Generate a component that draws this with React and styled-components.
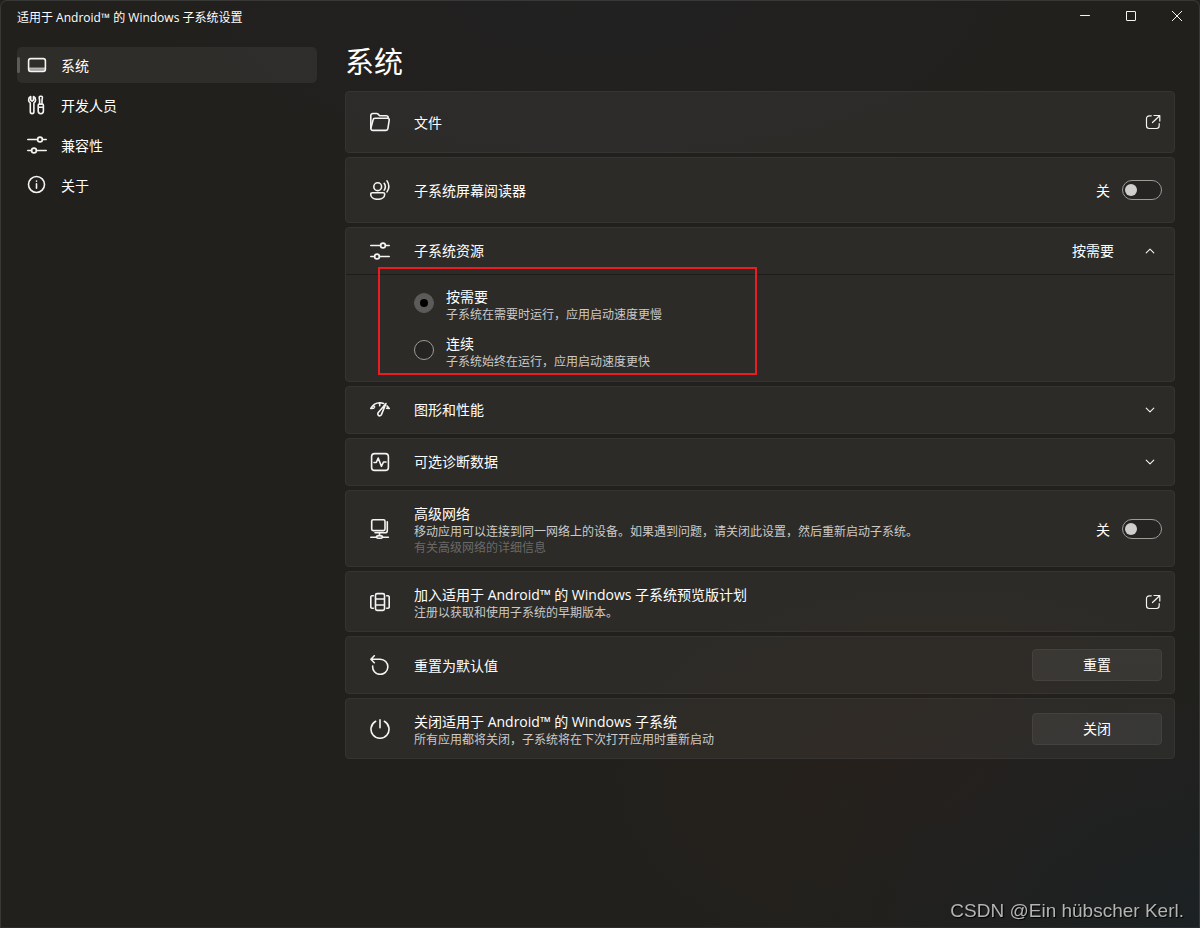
import React, { useState } from 'react';
import styled, { createGlobalStyle } from 'styled-components';

const GlobalStyle = createGlobalStyle`
  * { box-sizing: border-box; }
  body {
    margin: 0;
    background: #21201e;
    color: #fff;
    font-family: "Open Sans", "Noto Sans CJK SC", sans-serif;
    font-size: 14px;
    line-height: 20px;
  }
  button, input { font: inherit; color: inherit; }
  a { color: inherit; text-decoration: none; }
`;

const Window = styled.div`
  min-height: 100vh;
  display: flex;
  flex-direction: column;
  border: 1px solid #383836;
  border-bottom-color: #2a2a28;
  border-radius: 7px 7px 0 0;
  background:
    radial-gradient(ellipse 420px 300px at 100% 100%, #1c2123 0%, #1c212300 100%),
    radial-gradient(ellipse 400px 240px at 78% 84%, #27201c 0%, #27201c00 100%),
    radial-gradient(ellipse 500px 200px at 50% 0%, #212121 0%, #21212100 100%),
    #21201d;
`;

const TitleBar = styled.header`
  display: flex;
  justify-content: space-between;
  align-items: flex-start;
  height: 46px;
`;

const WindowTitle = styled.div`
  padding: 8px 0 0 16px;
  font-size: 12px;
  line-height: 18px;
`;

const WindowControls = styled.div`
  display: flex;
  margin-right: -1px;
`;

const ControlButton = styled.button`
  display: grid;
  place-items: center;
  width: 46px;
  height: 30px;
  padding: 0;
  border: 0;
  background: none;
`;

const Body = styled.div`
  display: flex;
  flex: 1;
  gap: 28px;
  padding: 0 24px 0 16px;
`;

const Sidebar = styled.nav`
  display: flex;
  flex-direction: column;
  gap: 4px;
  flex: 0 0 300px;
`;

const NavItem = styled.a`
  position: relative;
  display: flex;
  align-items: center;
  gap: 14px;
  height: 36px;
  padding: 0 10px;
  border-radius: 5px;
  background: ${(p) => (p.$active ? 'rgba(255, 255, 255, 0.06)' : 'none')};

  &::before {
    content: "";
    display: ${(p) => (p.$active ? 'block' : 'none')};
    position: absolute;
    left: 0;
    top: 10px;
    width: 3px;
    height: 16px;
    border-radius: 2px;
    background: #5c5b5a;
  }
`;

const Label = styled.span`
  padding-top: 2px;
`;

const Main = styled.main`
  flex: 1;
  min-width: 0;
`;

const PageTitle = styled.h1`
  margin: 0 0 14px;
  font-size: 29px;
  line-height: 30px;
  font-weight: 400;
`;

const CardList = styled.div`
  display: flex;
  flex-direction: column;
  gap: 4px;
`;

const Card = styled.section`
  position: relative;
  border: 1px solid #353432;
  border-radius: 4px;
  background: rgba(255, 255, 255, 0.05);
`;

const CardRow = styled.div`
  display: flex;
  align-items: center;
  gap: 24px;
  width: 100%;
  min-height: ${(p) => p.$height}px;
  padding: 0 12px 0 24px;
  border: 0;
  background: none;
  text-align: left;
`;

const CardText = styled.div`
  flex: 1;
  min-width: 0;
  padding-top: 2px;

  button & { padding-top: 0; }
`;

const Description = styled.div`
  font-size: 12px;
  line-height: 16px;
  color: #cbcac9;
`;

const MutedLink = styled.a`
  display: block;
  font-size: 12px;
  line-height: 16px;
  color: #6b6967;
`;

const SlotBox = styled.span`
  display: grid;
  place-items: center;
  width: ${(p) => p.$width}px;
`;

const SwitchLabel = styled.label`
  display: flex;
  align-items: center;
  gap: 12px;
`;

const Switch = styled.input`
  appearance: none;
  display: flex;
  align-items: center;
  width: 40px;
  height: 20px;
  margin: 0;
  padding: 0 2px;
  border: 1px solid #9c9b9a;
  border-radius: 10px;
  background: #252422;

  &::before {
    content: "";
    width: 12px;
    height: 12px;
    border-radius: 50%;
    background: #cfcecd;
  }
  &:checked { justify-content: flex-end; }
`;

const Options = styled.div`
  display: flex;
  flex-direction: column;
  gap: 11px;
  padding: 12px 68px 11px;
  border-top: 1px solid #1e1d1b;
`;

const Option = styled.label`
  display: flex;
  align-items: flex-start;
  gap: 12px;
`;

const Radio = styled.input`
  appearance: none;
  display: grid;
  place-items: center;
  width: 20px;
  height: 20px;
  margin: 6px 0 0;
  border: 1px solid #9c9b9a;
  border-radius: 50%;
  background: #252422;

  &:checked { border-color: #5c5b5a; background: #5c5b5a; }
  &:checked::before {
    content: "";
    width: 8px;
    height: 8px;
    border-radius: 50%;
    background: #000;
  }
`;

const Highlight = styled.div`
  position: absolute;
  left: 32px;
  top: 39px;
  width: 379px;
  height: 108px;
  border: 2px solid #ed1c24;
  pointer-events: none;
`;

const ActionButton = styled.button`
  width: 130px;
  height: 32px;
  padding: 0;
  border: 1px solid #434240;
  border-radius: 4px;
  background: rgba(255, 255, 255, 0.06);
`;

const Watermark = styled.div`
  position: fixed;
  right: 16px;
  bottom: 5px;
  font-family: "Liberation Sans", sans-serif;
  font-size: 19px;
  line-height: 24px;
  color: #b4b4b3;
  text-shadow: 1px 1px 1px #000;
`;

const Glyph = styled.svg`
  display: block;
  flex: none;
  fill: none;
  stroke: #f4f4f3;
  stroke-width: ${(p) => p.$stroke || 1.6};
  stroke-linecap: round;
  stroke-linejoin: round;
`;

const shapes = {
  system: (
    <>
      <rect x="1.6" y="3.6" width="16.8" height="12.8" rx="2.2" />
      <path d="M2 13.2h16" strokeWidth="1" />
      <path d="M2.4 14.8h15.2" strokeWidth="1.4" opacity=".6" />
    </>
  ),
  developer: (
    <>
      <path d="M3.7 1.6v3.6l1.4 1 1.4-1V1.6c1.3.6 2.1 1.8 2.1 3.3 0 1.4-.7 2.4-1.7 3v8.9a1.7 1.7 0 0 1-3.6 0V7.9c-1-.6-1.7-1.6-1.7-3 0-1.5.8-2.7 2.1-3.3Z" />
      <path d="M12.2 2.3c0-.7.5-1 1-1h1.2c.6 0 1 .3 1 1l-.4 3v3.8h-2.4V5.3ZM11.2 10.2c0-.7.4-1.1 1-1.1h3.2c.6 0 1 .4 1 1.1v5.9a2.6 2.6 0 0 1-5.2 0ZM11.3 12.2h5" />
    </>
  ),
  sliders: (
    <>
      <path d="M.8 4.5h9.8M15.4 4.5h3.8M.8 15.5h3.8M9.4 15.5h9.8" />
      <circle cx="13" cy="4.5" r="2.4" />
      <circle cx="7" cy="15.5" r="2.4" />
    </>
  ),
  info: (
    <>
      <circle cx="9.5" cy="9.5" r="8" />
      <path d="M9.5 8.8v4.5M9.5 6.1v.2" />
    </>
  ),
  folder: (
    <>
      <path d="M.8 16.2V3.5a2 2 0 0 1 2-2h3.9c.6 0 1 .2 1.4.6l1.5 1.7h6.6a2 2 0 0 1 2 2v.4" />
      <path d="M5.3 6.2h12.2c1.2 0 1.9 1 1.7 2l-1.3 8.500a2 2 0 0 1-2 1.700H2.800a2 2 0 0 1-1.900-2.300L3 8a2.200 2.200 0 0 1 2.300-1.800Z" />
    </>
  ),
  narrator: (
    <>
      <circle cx="7.7" cy="6.7" r="3.9" />
      <path d="M2.2 12.7h11a1.5 1.5 0 0 1 1.5 1.5c0 3.100-3.100 5.100-7 5.100s-7-2-7-5.100a1.500 1.500 0 0 1 1.500-1.500Z" />
      <path d="M14.2 3.3a6 6 0 0 1 0 6.8M17 .9a9.8 9.8 0 0 1 0 11" />
    </>
  ),
  gauge: (
    <>
      <path d="M.8 8.400C3 4.400 6.200 2.700 9.800 2.700c1.500 0 2.700.2 3.800.7M.8 8.400l2.900-.2M3.300 5.300l1.300 1.600M9.700 2.900v2.800M17.100 5.900l2.100 2.500-2.600-.1" />
      <path d="M16 3.500 8.300 12.600a2 2 0 0 0 .3 2.900c.9.600 2.100.4 2.700-.6Z" />
    </>
  ),
  pulse: (
    <>
      <rect x="1.6" y="1.6" width="16.8" height="16.8" rx="3" />
      <path d="M4 10.500h2.300L8.200 6l3.200 8.300 2.100-4.300H16" />
    </>
  ),
  network: (
    <>
      <rect x="1.7" y=".8" width="13.3" height="10.8" rx="1.5" />
      <path d="M17.300 2.800v8.600a2.400 2.400 0 0 1-2.400 2.400H5M9.500 14v2.200M.8 18.300h5.700M12.500 18.300h5.900" />
      <ellipse cx="9.5" cy="17.9" rx="3" ry="1.3" />
    </>
  ),
  insider: (
    <>
      <rect x="5.5" y="1.6" width="9" height="16.8" rx="1.6" />
      <path d="M5.800 7h8.400M5.800 13h8.400M3.300 3.800H2a1.200 1.200 0 0 0-1.200 1.300v9.800A1.200 1.200 0 0 0 2 16.200h1.300M16.700 3.800H18a1.200 1.200 0 0 1 1.200 1.300v9.800a1.200 1.200 0 0 1-1.200 1.300h-1.300" />
    </>
  ),
  reset: <path d="M4.300.8.900 4.200l3.400 3.500M1 4.200h9.200A7.600 7.600 0 1 1 2.700 11" />,
  power: <path d="M10 .9v7.800M5.700 2.300a9 9 0 1 0 8.600 0" />,
};

const Icon = ({ name }) => (
  <Glyph width="20" height="20" viewBox="0 0 20 20" aria-hidden="true">{shapes[name]}</Glyph>
);

const OpenIcon = () => (
  <SlotBox $width={18}>
    <Glyph $stroke={1.2} width="16" height="16" viewBox="0 0 16 16" aria-hidden="true">
      <path d="M6.300 1.800H4.200A2.700 2.700 0 0 0 1.500 4.500v7.300a2.700 2.700 0 0 0 2.700 2.700h7.300a2.700 2.700 0 0 0 2.700-2.700V9.500M9 1.500h5.800v5.600M14.600 1.700 7.500 8.500" />
    </Glyph>
  </SlotBox>
);

const Chevron = ({ up }) => (
  <SlotBox $width={24}>
    <Glyph $stroke={1.1} width="10" height="6" viewBox="0 0 10 6" aria-hidden="true">
      <path d={up ? 'M1.200 4.900 5 1.200l3.800 3.700' : 'M1.200 1.100 5 4.800l3.800-3.700'} />
    </Glyph>
  </SlotBox>
);

const Setting = ({ icon, title, desc, link, height, children, ...rest }) => (
  <CardRow $height={height} {...rest}>
    <Icon name={icon} />
    <CardText>
      <div>{title}</div>
      {desc && <Description>{desc}</Description>}
      {link && <MutedLink href="#network-info">{link}</MutedLink>}
    </CardText>
    {children}
  </CardRow>
);

const Toggle = ({ name }) => {
  const [on, setOn] = useState(false);
  return (
    <SwitchLabel>
      <Label>{on ? '开' : '关'}</Label>
      <Switch type="checkbox" role="switch" aria-label={name} checked={on} onChange={() => setOn(!on)} />
    </SwitchLabel>
  );
};

const navItems = [
  ['system', '系统'],
  ['developer', '开发人员'],
  ['sliders', '兼容性'],
  ['info', '关于'],
];

const modes = [
  ['按需要', '子系统在需要时运行，应用启动速度更慢'],
  ['连续', '子系统始终在运行，应用启动速度更快'],
];

export default function App() {
  const [mode, setMode] = useState('按需要');
  return (
    <Window>
      <GlobalStyle />
      <TitleBar>
        <WindowTitle>适用于 Android™ 的 Windows 子系统设置</WindowTitle>
        <WindowControls>
          <ControlButton aria-label="最小化">
            <Glyph $stroke={1} width="10" height="10" viewBox="0 0 10 10"><path d="M.5 4.500h9" /></Glyph>
          </ControlButton>
          <ControlButton aria-label="最大化">
            <Glyph $stroke={1} width="10" height="10" viewBox="0 0 10 10"><rect x=".5" y=".5" width="9" height="9" rx=".5" /></Glyph>
          </ControlButton>
          <ControlButton aria-label="关闭窗口">
            <Glyph $stroke={1} width="10" height="10" viewBox="0 0 10 10"><path d="m0 0 10 10M10 0 0 10" /></Glyph>
          </ControlButton>
        </WindowControls>
      </TitleBar>
      <Body>
        <Sidebar>
          {navItems.map(([icon, label], i) => (
            <NavItem key={icon} href={`#${icon}`} $active={i === 0}>
              <Icon name={icon} />
              <Label>{label}</Label>
            </NavItem>
          ))}
        </Sidebar>
        <Main>
          <PageTitle>系统</PageTitle>
          <CardList>
            <Card>
              <Setting as="a" href="#files" icon="folder" title="文件" height={60}><OpenIcon /></Setting>
            </Card>
            <Card>
              <Setting icon="narrator" title="子系统屏幕阅读器" height={64}><Toggle name="子系统屏幕阅读器" /></Setting>
            </Card>
            <Card>
              <Setting as="button" aria-expanded="true" icon="sliders" title="子系统资源" height={46}>
                <span>{mode}</span>
                <Chevron up />
              </Setting>
              <Options role="radiogroup" aria-label="子系统资源">
                {modes.map(([label, desc]) => (
                  <Option key={label}>
                    <Radio type="radio" name="mode" checked={mode === label} onChange={() => setMode(label)} />
                    <div>
                      <div>{label}</div>
                      <Description>{desc}</Description>
                    </div>
                  </Option>
                ))}
              </Options>
              <Highlight />
            </Card>
            <Card>
              <Setting as="button" aria-expanded="false" icon="gauge" title="图形和性能" height={46}><Chevron /></Setting>
            </Card>
            <Card>
              <Setting as="button" aria-expanded="false" icon="pulse" title="可选诊断数据" height={46}><Chevron /></Setting>
            </Card>
            <Card>
              <Setting
                icon="network"
                title="高级网络"
                desc="移动应用可以连接到同一网络上的设备。如果遇到问题，请关闭此设置，然后重新启动子系统。"
                link="有关高级网络的详细信息"
                height={75}
              >
                <Toggle name="高级网络" />
              </Setting>
            </Card>
            <Card>
              <Setting
                as="a"
                href="#preview"
                icon="insider"
                title="加入适用于 Android™ 的 Windows 子系统预览版计划"
                desc="注册以获取和使用子系统的早期版本。"
                height={59}
              >
                <OpenIcon />
              </Setting>
            </Card>
            <Card>
              <Setting icon="reset" title="重置为默认值" height={56}><ActionButton>重置</ActionButton></Setting>
            </Card>
            <Card>
              <Setting
                icon="power"
                title="关闭适用于 Android™ 的 Windows 子系统"
                desc="所有应用都将关闭，子系统将在下次打开应用时重新启动"
                height={59}
              >
                <ActionButton>关闭</ActionButton>
              </Setting>
            </Card>
          </CardList>
        </Main>
      </Body>
      <Watermark>CSDN @Ein hübscher Kerl.</Watermark>
    </Window>
  );
}
